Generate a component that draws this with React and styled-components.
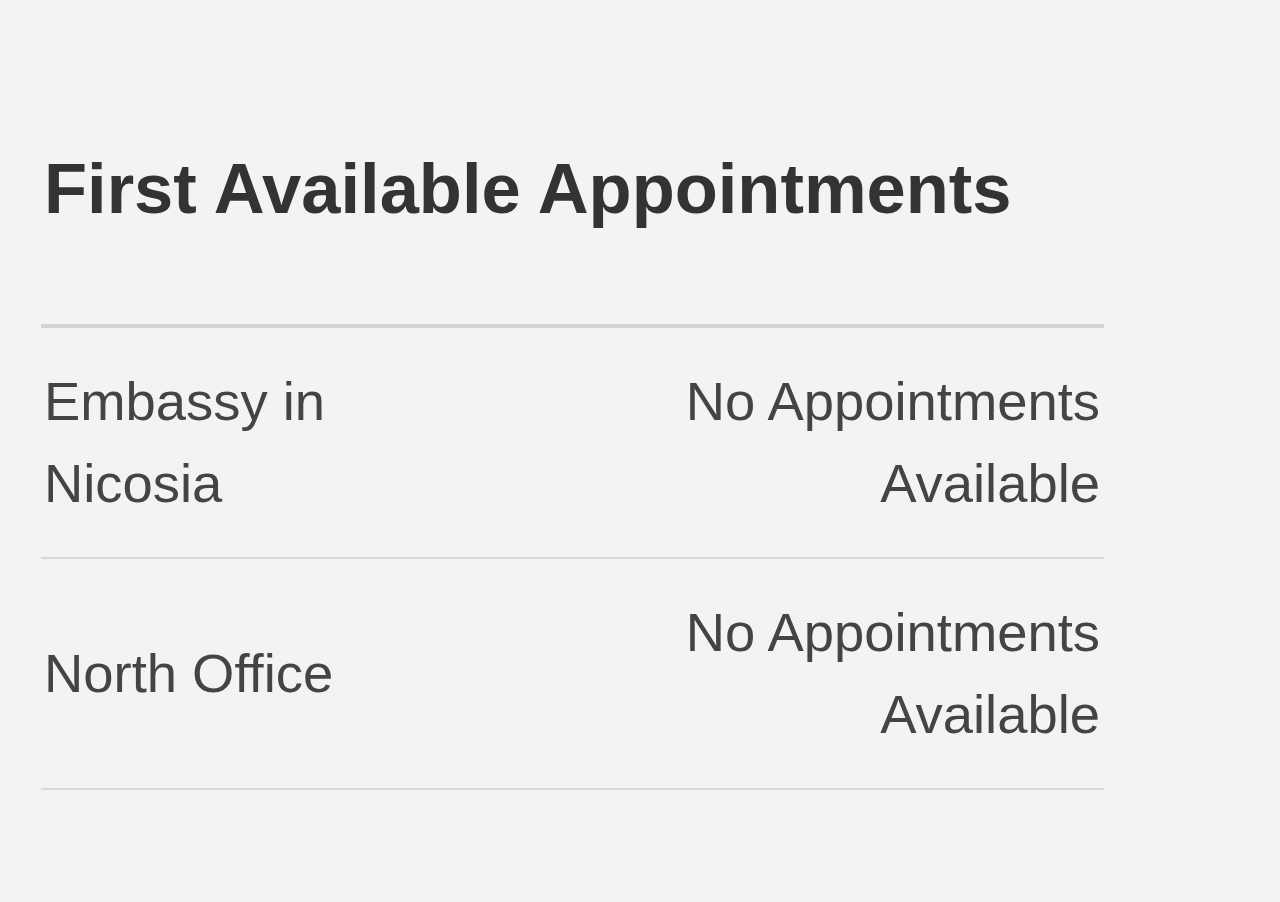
import styled, { createGlobalStyle } from "styled-components";

const GlobalStyle = createGlobalStyle`
  html, body {
    margin: 0;
    padding: 0;
    background: #f3f3f3;
  }
  body {
    font-family: "Liberation Sans", Arial, sans-serif;
  }
`;

const rows = [
  { office: "Embassy in Nicosia", status: "No Appointments Available" },
  { office: "North Office", status: "No Appointments Available" },
];

const App = () => {
  return (
    <Page>
      <GlobalStyle />
      <Title>First Available Appointments</Title>
      <Table>
        <colgroup>
          <col style={{ width: "40%" }} />
          <col style={{ width: "60%" }} />
        </colgroup>
        <tbody>
          {rows.map((row) => (
            <Row key={row.office}>
              <Cell>{row.office}</Cell>
              <Cell align="right">{row.status}</Cell>
            </Row>
          ))}
        </tbody>
      </Table>
    </Page>
  );
};

const Page = styled.div`
  min-height: 902px;
  box-sizing: border-box;
  padding: 147px 0 0 41px;
  background: #f3f3f3;
`;

const Title = styled.h2`
  margin: 0 0 93px 3px;
  font-size: 70.5px;
  line-height: 84px;
  font-weight: 700;
  color: #333;
`;

const Table = styled.table`
  width: 1063px;
  table-layout: fixed;
  border-collapse: collapse;
  border-top: 4px solid #d3d3d3;
`;

const Row = styled.tr`
  border-bottom: 2px solid #d8d8d8;
`;

const Cell = styled.td`
  padding: 33px 4px 32px 3px;
  font-size: 54.4px;
  line-height: 82px;
  color: #444;
  vertical-align: middle;
  text-align: ${(p) => p.align || "left"};
`;

export default App;
